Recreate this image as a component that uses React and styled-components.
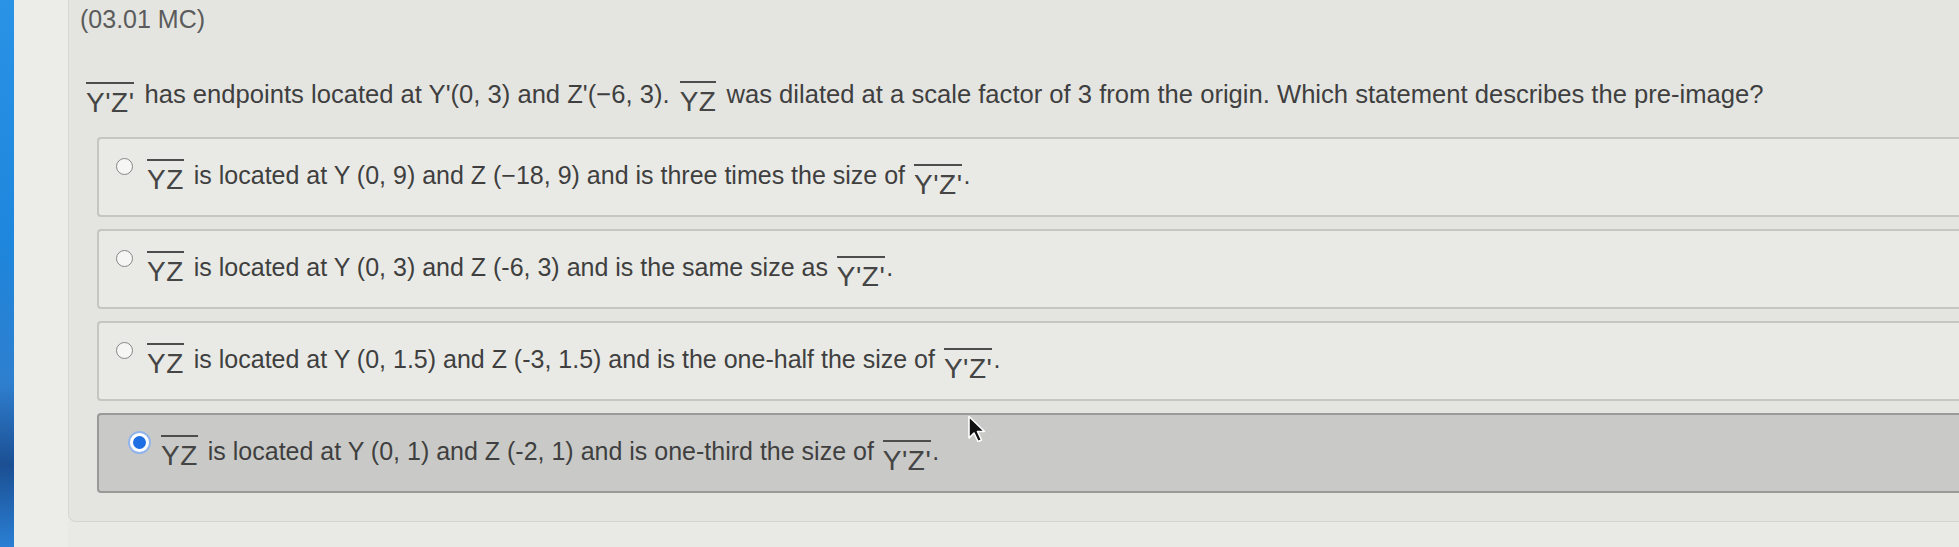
import React from "react";
import styled, { createGlobalStyle } from "styled-components";

const GlobalStyle = createGlobalStyle`
  html, body { margin: 0; padding: 0; }
  body {
    background: #e9e9e5;
    font-family: "Liberation Sans", Arial, Helvetica, sans-serif;
    overflow: hidden;
  }
`;

const Page = styled.div`
  display: flex;
  width: 1959px;
  height: 547px;
  overflow: hidden;
`;

const BlueEdge = styled.div`
  flex: 0 0 14px;
  background: linear-gradient(180deg, #2a93e6 0%, #1e86dc 45%, #2f7fcf 70%, #1b4f93 85%, #2a7fd4 100%);
`;

const Gutter = styled.div`
  flex: 0 0 54px;
  background: #ecece8;
`;

const Panel = styled.div`
  flex: 1 1 auto;
  height: 522px;
  box-sizing: border-box;
  background: #e4e5e1;
  border-left: 1px solid #d8d8d3;
  border-bottom: 1px solid #d4d4cf;
  border-bottom-left-radius: 8px;
  padding: 4px 0 0 11px;
  display: flex;
  flex-direction: column;
`;

const Title = styled.div`
  font-size: 25px;
  line-height: 30px;
  height: 30px;
  color: #5b5b5b;
`;

const Question = styled.div`
  margin-top: 42px;
  margin-left: 6px;
  height: 36px;
  font-size: 25.6px;
  line-height: 36px;
  color: #3f3f3f;
  white-space: nowrap;
`;

const Over = styled.span`
  display: inline-block;
  border-top: 2px solid #4d4d4d;
  padding-top: 5px;
  line-height: 1;
  font-size: 28px;
  color: #454545;
  vertical-align: ${(p) => p.$drop || 0}px;
  margin: 0 ${(p) => p.$mr ?? 7}px 0 ${(p) => p.$ml ?? 2}px;
  letter-spacing: 0.5px;
`;

const Options = styled.div`
  margin-top: 25px;
  margin-left: 17px;
  display: flex;
  flex-direction: column;
  gap: 12px;
`;

const Option = styled.div`
  position: relative;
  box-sizing: border-box;
  height: 80px;
  margin-right: -20px;
  background: ${(p) => (p.$selected ? "#c9cac7" : "#e9eae6")};
  border: 2px solid ${(p) => (p.$selected ? "#9a9b98" : "#c5c6c2")};
  border-right: none;
  border-radius: 4px 0 0 4px;
  padding: 16px 0 0 ${(p) => (p.$selected ? 29 : 17)}px;
  display: flex;
  align-items: flex-start;
  white-space: nowrap;
`;

const Radio = styled.span`
  flex: 0 0 auto;
  box-sizing: border-box;
  width: 17px;
  height: 17px;
  margin-top: 3px;
  margin-right: 14px;
  border-radius: 50%;
  border: 1.5px solid #868686;
  background: #f6f6f4;
`;

const RadioOn = styled.span`
  flex: 0 0 auto;
  box-sizing: border-box;
  width: 23px;
  height: 23px;
  margin-top: 0px;
  margin-right: 10px;
  border-radius: 50%;
  border: 2px solid #92b5ec;
  background: #ffffff;
  display: flex;
  align-items: center;
  justify-content: center;
  &::after {
    content: "";
    width: 13px;
    height: 13px;
    border-radius: 50%;
    background: #1d6fe3;
  }
`;

const Label = styled.span`
  font-size: 25px;
  line-height: 30px;
  color: #3f3f3f;
  margin-top: 4px;
`;

const Cursor = styled.svg`
  position: absolute;
  left: 868px;
  top: 0px;
  width: 20px;
  height: 29px;
`;

const YZ = ({ drop, ml, mr }) => (
  <Over $drop={drop} $ml={ml} $mr={mr}>YZ</Over>
);
const YpZp = ({ drop, ml, mr }) => (
  <Over $drop={drop} $ml={ml} $mr={mr}>Y'Z'</Over>
);

const options = [
  {
    text: "is located at Y (0, 9) and Z (\u221218, 9) and is three times the size of",
  },
  {
    text: "is located at Y (0, 3) and Z (-6, 3) and is the same size as",
  },
  {
    text: "is located at Y (0, 1.5) and Z (-3, 1.5) and is the one-half the size of",
  },
  {
    text: "is located at Y (0, 1) and Z (-2, 1) and is one-third the size of",
    selected: true,
  },
];

export default function App() {
  return (
    <>
      <GlobalStyle />
      <Page>
        <BlueEdge />
        <Gutter />
        <Panel>
          <Title>(03.01 MC)</Title>
          <Question>
            <YpZp drop={-9} ml={0} mr={10} />has endpoints located at Y'(0, 3) and Z'(&minus;6, 3).{" "}
            <YZ drop={-8} ml={3} mr={10} />was dilated at a scale factor of 3 from the origin. Which statement describes the pre-image?
          </Question>
          <Options>
            {options.map((o, i) => (
              <Option key={i} $selected={o.selected}>
                {o.selected ? <RadioOn /> : <Radio />}
                <Label>
                  <YZ drop={-5} ml={0} mr={10} />
                  {o.text} <YpZp drop={-10} ml={2} mr={1} />.
                </Label>
                {o.selected && (
                  <Cursor viewBox="0 0 20 29">
                    <path
                      d="M2 1.5 L2 23 L7 18 L11 26.5 L14.5 25 L10.5 16.5 L17.5 16.5 Z"
                      fill="#111"
                      stroke="#fff"
                      strokeWidth="1.6"
                      strokeLinejoin="round"
                    />
                  </Cursor>
                )}
              </Option>
            ))}
          </Options>
        </Panel>
      </Page>
    </>
  );
}
